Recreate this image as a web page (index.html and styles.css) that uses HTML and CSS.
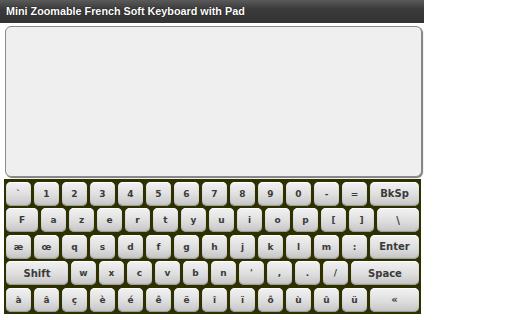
FILE: index.html
```html
<!DOCTYPE html>
<html lang="fr">
<head>
    <meta charset="UTF-8">
    <title>Mini Zoomable French Soft Keyboard with Pad</title>
    <link rel="stylesheet" href="styles.css">
</head>
<body>
    <div class="app">
        <div class="title-bar">Mini Zoomable French Soft Keyboard with Pad</div>

        <!-- Pad -->
        <div class="pad-wrap">
            <textarea class="pad"></textarea>
        </div>

        <!-- Keyboard -->
        <div class="keyboard">
            <div class="row">
                <div class="key">`</div>
                <div class="key">1</div>
                <div class="key">2</div>
                <div class="key">3</div>
                <div class="key">4</div>
                <div class="key">5</div>
                <div class="key">6</div>
                <div class="key">7</div>
                <div class="key">8</div>
                <div class="key">9</div>
                <div class="key">0</div>
                <div class="key">-</div>
                <div class="key">=</div>
                <div class="key wide">BkSp</div>
            </div>
            <div class="row">
                <div class="key key-f">F</div>
                <div class="key">a</div>
                <div class="key">z</div>
                <div class="key">e</div>
                <div class="key">r</div>
                <div class="key">t</div>
                <div class="key">y</div>
                <div class="key">u</div>
                <div class="key">i</div>
                <div class="key">o</div>
                <div class="key">p</div>
                <div class="key">[</div>
                <div class="key">]</div>
                <div class="key wide">\</div>
            </div>
            <div class="row">
                <div class="key">æ</div>
                <div class="key">œ</div>
                <div class="key">q</div>
                <div class="key">s</div>
                <div class="key">d</div>
                <div class="key">f</div>
                <div class="key">g</div>
                <div class="key">h</div>
                <div class="key">j</div>
                <div class="key">k</div>
                <div class="key">l</div>
                <div class="key">m</div>
                <div class="key">:</div>
                <div class="key wide">Enter</div>
            </div>
            <div class="row">
                <div class="key key-shift">Shift</div>
                <div class="key">w</div>
                <div class="key">x</div>
                <div class="key">c</div>
                <div class="key">v</div>
                <div class="key">b</div>
                <div class="key">n</div>
                <div class="key">'</div>
                <div class="key">,</div>
                <div class="key">.</div>
                <div class="key">/</div>
                <div class="key wide">Space</div>
            </div>
            <div class="row">
                <div class="key">à</div>
                <div class="key">â</div>
                <div class="key">ç</div>
                <div class="key">è</div>
                <div class="key">é</div>
                <div class="key">ê</div>
                <div class="key">ë</div>
                <div class="key">î</div>
                <div class="key">ï</div>
                <div class="key">ô</div>
                <div class="key">ù</div>
                <div class="key">û</div>
                <div class="key">ü</div>
                <div class="key wide">«</div>
            </div>
        </div>
    </div>
</body>
</html>
```

FILE: styles.css
```css
/* General Styling */
body {
    margin: 0;
    background: #fff;
    font-family: "Liberation Sans", Arial, sans-serif;
}

.app {
    width: 424px;
}

.title-bar {
    height: 23px;
    line-height: 22px;
    padding-left: 6px;
    background: linear-gradient(#5a5a5a, #3a3a3a 40%, #333);
    color: #fff;
    font-size: 10.8px;
    font-weight: bold;
    text-shadow: 0 0 1px #000;
}

.pad-wrap {
    padding: 3px 2px 1px 5px;
}

.pad {
    display: block;
    box-sizing: border-box;
    width: 417px;
    height: 151px;
    margin: 0;
    border: 1px solid #8a8a8a;
    border-radius: 6px;
    background: #efefef;
    box-shadow: 1px 1px 1px #777;
    resize: none;
    outline: none;
}

.keyboard {
    width: 417px;
    margin-left: 4px;
    margin-top: 1px;
    box-sizing: border-box;
    padding: 2.5px 2px 2px 2px;
    background: #2e3000;
    display: flex;
    flex-direction: column;
    gap: 2.5px;
}

.row {
    display: flex;
    gap: 3px;
}

.key {
    flex: none;
    width: 25px;
    height: 24px;
    box-sizing: border-box;
    border-radius: 5px;
    background: linear-gradient(#f2f2f2, #dedede 55%, #c4c4c4);
    box-shadow: inset 0 -1px 1px #9a9a9a, inset 0 1px 0 #fff;
    display: flex;
    align-items: center;
    justify-content: center;
    color: #3a3a3a;
    font-family: "DejaVu Sans", sans-serif;
    font-size: 9px;
    font-weight: bold;
}

.key.wide {
    flex: 1;
    font-size: 10px;
}

.key-f {
    width: 32px;
}

.key-shift {
    width: 62px;
    font-size: 10px;
}
```
